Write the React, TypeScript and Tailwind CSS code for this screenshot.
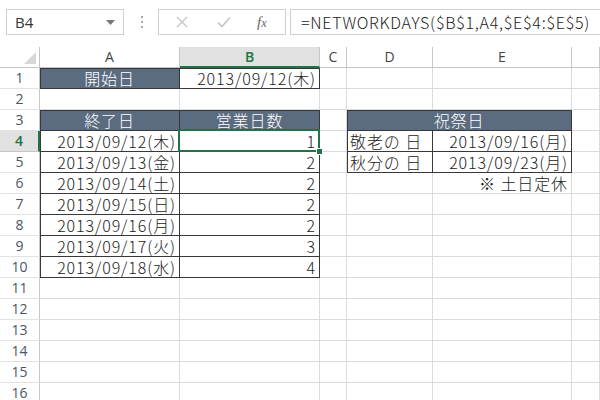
import React from "react";

const cellFont = { fontFamily: '"Noto Sans CJK JP", "Liberation Sans", sans-serif' };
const uiFont = { fontFamily: '"Open Sans", "Liberation Sans", sans-serif' };

type Kind = "plain" | "head" | "box";

interface CellProps {
  children?: React.ReactNode;
  kind?: Kind;
  align?: "left" | "right" | "center";
  edge?: "" | "l" | "t" | "lt";
  span?: boolean;
  selected?: boolean;
}

// one worksheet cell; gridline on right/bottom, dark borders for formatted cells
const Cell: React.FC<CellProps> = ({ children, kind = "plain", align = "left", edge = "", span, selected }) => {
  const base =
    kind === "plain"
      ? "border-r border-b border-[#dadada] bg-white text-[#222]"
      : kind === "head"
      ? "border-r border-b border-[#383838] bg-[#5b6b80] text-white"
      : "border-r border-b border-[#383838] bg-white text-[#222]";
  const inset =
    edge === "lt"
      ? "shadow-[inset_1px_1px_0_#383838]"
      : edge === "l"
      ? "shadow-[inset_1px_0_0_#383838]"
      : edge === "t"
      ? "shadow-[inset_0_1px_0_#383838]"
      : "";
  const justify = align === "right" ? "justify-end" : align === "center" ? "justify-center" : "justify-start";
  return (
    <div
      className={`relative flex h-[21px] items-center overflow-visible whitespace-nowrap px-[3px] ${base} ${inset} ${justify} ${
        span ? "col-span-2" : ""
      }`}
    >
      {children !== undefined && (
        <span className="text-[16px] font-light leading-[18px] tracking-[0.9px]" style={cellFont}>
          {children}
        </span>
      )}
      {selected && (
        <>
          <div className="pointer-events-none absolute -left-[2px] -top-[2px] -right-px -bottom-px z-10 border-2 border-[#217346]" />
          <div className="absolute -bottom-[4px] -right-[4px] z-20 h-[7px] w-[7px] border border-white bg-[#217346]" />
        </>
      )}
    </div>
  );
};

const RowHead: React.FC<{ n: number; active?: boolean }> = ({ n, active }) => (
  <div
    className={`flex h-[21px] items-center justify-center border-b text-[14px] leading-[18px] ${
      active
        ? "border-r-2 border-b-[#c6c6c6] border-r-[#217346] bg-[#e1e1e1] font-semibold text-[#217346]"
        : "border-r border-[#c6c6c6] border-b-[#e2e2e2] bg-white text-[#4a5568]"
    }`}
    style={uiFont}
  >
    {n}
  </div>
);

const ColHead: React.FC<{ label: string; active?: boolean }> = ({ label, active }) => (
  <div
    className={`flex h-[21px] items-center justify-center border-r text-[14px] leading-[18px] ${
      active
        ? "border-b-2 border-r-[#c6c6c6] border-b-[#217346] bg-[#e1e1e1] font-semibold text-[#217346]"
        : "border-b border-[#c6c6c6] bg-white text-[#444]"
    }`}
    style={uiFont}
  >
    {label}
  </div>
);

const dates = [
  "2013/09/12(木)",
  "2013/09/13(金)",
  "2013/09/14(土)",
  "2013/09/15(日)",
  "2013/09/16(月)",
  "2013/09/17(火)",
  "2013/09/18(水)",
];
const days = [1, 2, 2, 2, 2, 3, 4];

export default function App() {
  const rows: React.ReactNode[] = [];

  // row 1
  rows.push(
    <React.Fragment key="r1">
      <RowHead n={1} />
      <Cell kind="head" align="center" edge="lt">開始日</Cell>
      <Cell kind="box" align="right" edge="t">2013/09/12(木)</Cell>
      <Cell />
      <Cell />
      <Cell />
      <Cell />
    </React.Fragment>
  );
  // row 2
  rows.push(
    <React.Fragment key="r2">
      <RowHead n={2} />
      <Cell />
      <Cell />
      <Cell />
      <Cell />
      <Cell />
      <Cell />
    </React.Fragment>
  );
  // row 3
  rows.push(
    <React.Fragment key="r3">
      <RowHead n={3} />
      <Cell kind="head" align="center" edge="lt">終了日</Cell>
      <Cell kind="head" align="center" edge="t">営業日数</Cell>
      <Cell />
      <Cell kind="head" align="center" edge="lt" span>祝祭日</Cell>
      <Cell />
    </React.Fragment>
  );
  // rows 4-10
  dates.forEach((d, i) => {
    const r = i + 4;
    let dCell: React.ReactNode = <Cell />;
    let eCell: React.ReactNode = <Cell />;
    if (r === 4) {
      dCell = <Cell kind="box" edge="l">敬老の 日</Cell>;
      eCell = <Cell kind="box" align="right">2013/09/16(月)</Cell>;
    } else if (r === 5) {
      dCell = <Cell kind="box" edge="l">秋分の 日</Cell>;
      eCell = <Cell kind="box" align="right">2013/09/23(月)</Cell>;
    } else if (r === 6) {
      eCell = <Cell align="right">※ 土日定休</Cell>;
    }
    rows.push(
      <React.Fragment key={`r${r}`}>
        <RowHead n={r} active={r === 4} />
        <Cell kind="box" align="right" edge="l">{d}</Cell>
        <Cell kind="box" align="right" selected={r === 4}>{days[i]}</Cell>
        <Cell />
        {dCell}
        {eCell}
        <Cell />
      </React.Fragment>
    );
  });
  // rows 11-16
  for (let r = 11; r <= 16; r++) {
    rows.push(
      <React.Fragment key={`r${r}`}>
        <RowHead n={r} />
        <Cell />
        <Cell />
        <Cell />
        <Cell />
        <Cell />
        <Cell />
      </React.Fragment>
    );
  }

  return (
    <div className="h-[400px] w-[600px] overflow-hidden bg-white">
      {/* formula bar */}
      <div className="flex h-[47px] items-start pt-[9px]">
        <div className="ml-[6px] flex h-[26px] w-[118px] items-center justify-between border border-[#d0d0d0] pl-[8px] pr-[8px]">
          <span className="text-[15px] text-[#333]" style={uiFont}>B4</span>
          <svg width="9" height="5" viewBox="0 0 9 5">
            <path d="M0 0h9L4.5 5z" fill="#777" />
          </svg>
        </div>
        <div className="ml-[17px] flex h-[26px] flex-col items-center justify-center gap-[3px]">
          <span className="h-[2px] w-[2px] bg-[#a8a8a8]" />
          <span className="h-[2px] w-[2px] bg-[#a8a8a8]" />
          <span className="h-[2px] w-[2px] bg-[#a8a8a8]" />
        </div>
        <div className="ml-[15px] flex h-[26px] w-[128px] items-center border border-[#d0d0d0]">
          <svg className="ml-[17px]" width="12" height="12" viewBox="0 0 12 12">
            <path d="M1 1l10 10M11 1L1 11" stroke="#c4c4c4" strokeWidth="1.4" fill="none" />
          </svg>
          <svg className="ml-[29px]" width="14" height="12" viewBox="0 0 14 12">
            <path d="M1 6.5l4 4L13 1.5" stroke="#c4c4c4" strokeWidth="1.6" fill="none" />
          </svg>
          <span
            className="ml-[26px] text-[15px] italic text-[#666]"
            style={{ fontFamily: '"Liberation Serif", "DejaVu Serif", serif' }}
          >
            f<span className="text-[12px]">x</span>
          </span>
        </div>
        <div className="ml-[4px] flex h-[26px] flex-1 items-center border-y border-l border-[#d0d0d0] pl-[10px]">
          <span className="text-[16px] font-light tracking-[0.75px] text-[#222]" style={cellFont}>
            =NETWORKDAYS($B$1,A4,$E$4:$E$5)
          </span>
        </div>
      </div>

      {/* sheet */}
      <div className="grid grid-cols-[40px_140px_140px_27px_86px_139px_1fr]">
        <div className="relative h-[21px] border-r border-b border-[#c6c6c6] bg-white">
          <svg className="absolute bottom-[3px] right-[3px]" width="12" height="12" viewBox="0 0 12 12">
            <path d="M12 0V12H0z" fill="#d8d8d8" />
          </svg>
        </div>
        <ColHead label="A" />
        <ColHead label="B" active />
        <ColHead label="C" />
        <ColHead label="D" />
        <ColHead label="E" />
        <ColHead label="" />
        {rows}
      </div>
    </div>
  );
}
